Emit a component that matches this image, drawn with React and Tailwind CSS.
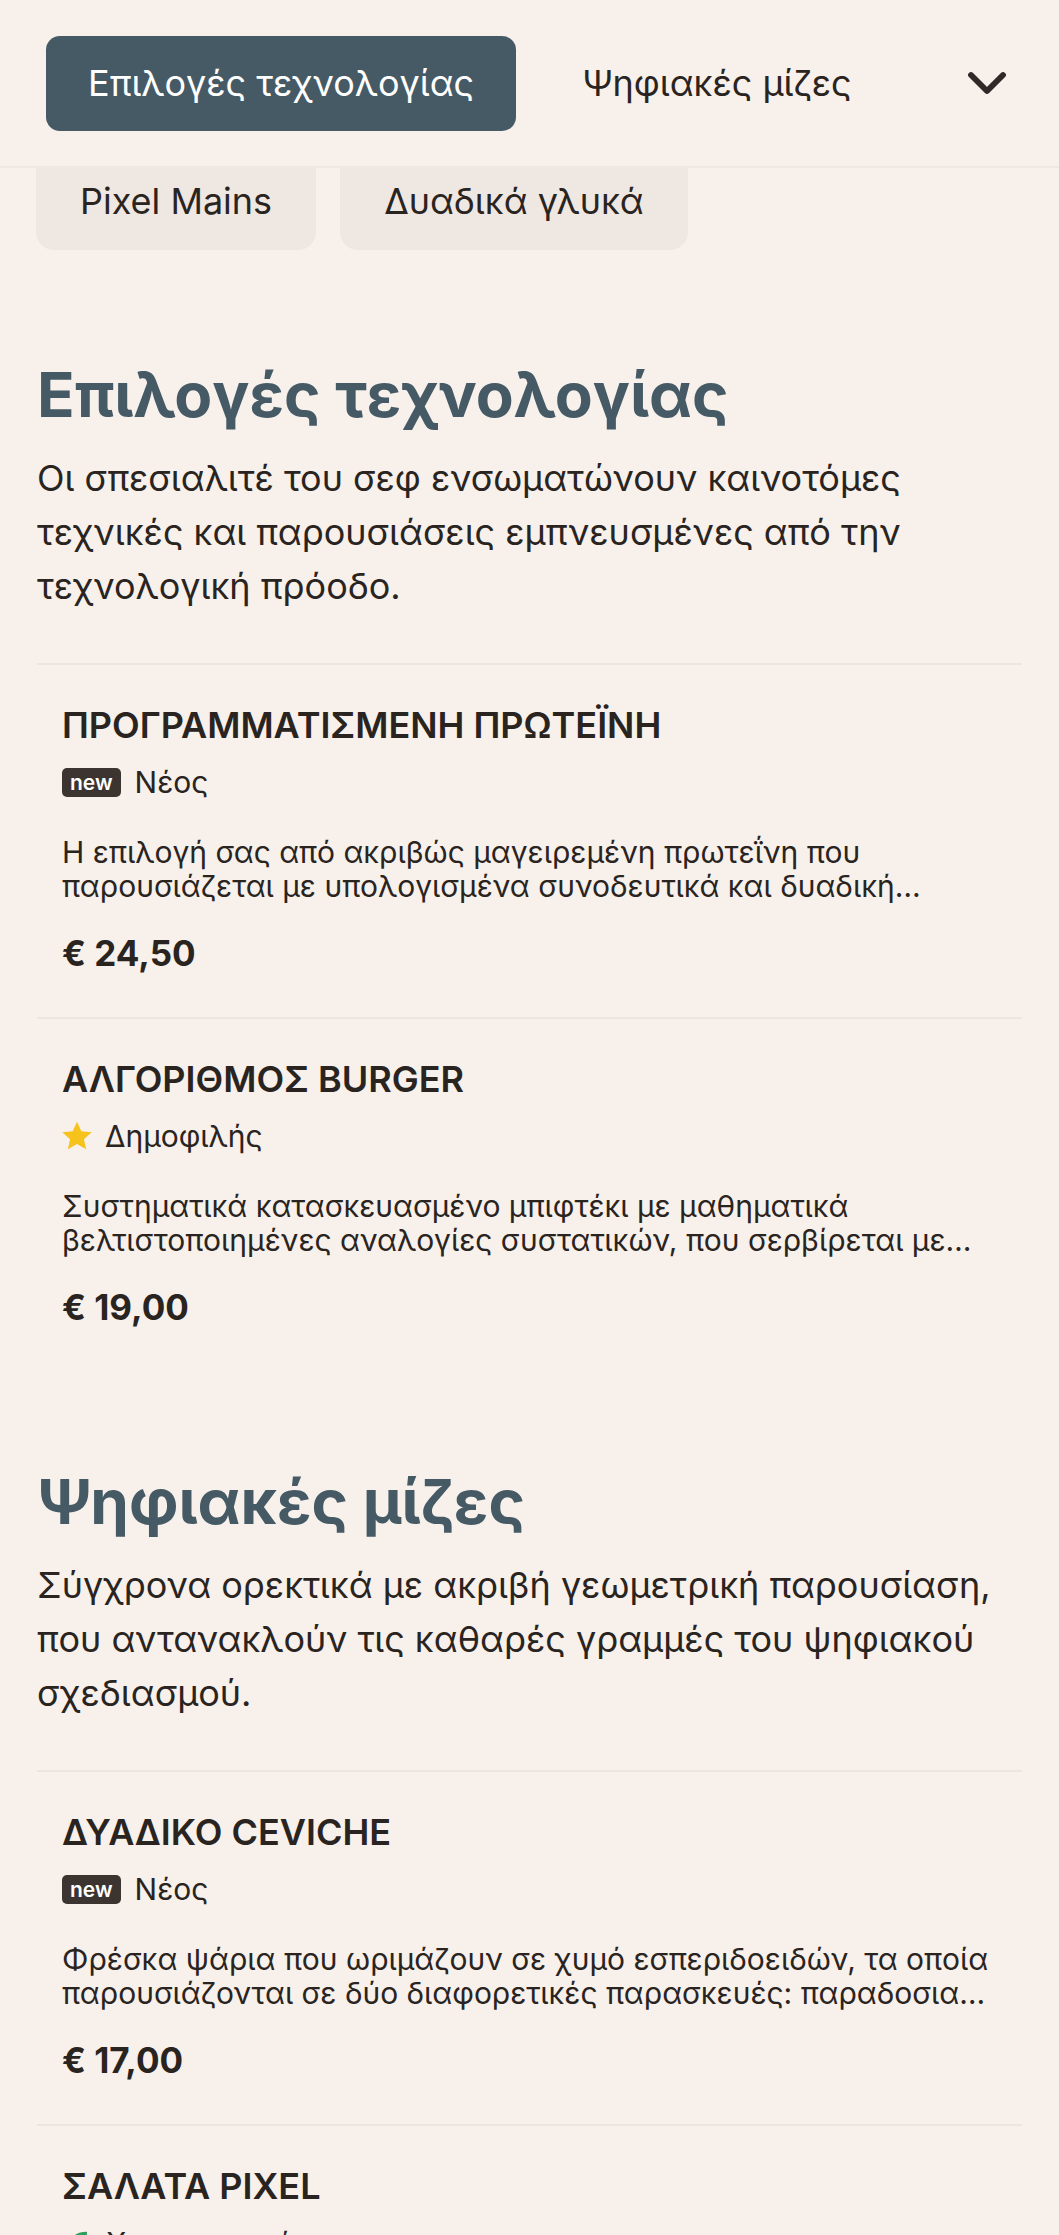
import { ChevronDown } from 'lucide-react';

const sections = [
  {
    id: 'tech',
    title: 'Επιλογές τεχνολογίας',
    text: 'Οι σπεσιαλιτέ του σεφ ενσωματώνουν καινοτόμες τεχνικές και παρουσιάσεις εμπνευσμένες από την τεχνολογική πρόοδο.',
    items: [
      {
        name: 'ΠΡΟΓΡΑΜΜΑΤΙΣΜΕΝΗ ΠΡΩΤΕΪΝΗ',
        tag: 'new',
        desc: 'Η επιλογή σας από ακριβώς μαγειρεμένη πρωτεΐνη που παρουσιάζεται με υπολογισμένα συνοδευτικά και δυαδική σάλτσα της ημέρας.',
        price: '€ 24,50',
      },
      {
        name: 'ΑΛΓΟΡΙΘΜΟΣ BURGER',
        tag: 'popular',
        desc: 'Συστηματικά κατασκευασμένο μπιφτέκι με μαθηματικά βελτιστοποιημένες αναλογίες συστατικών, που σερβίρεται με τηγανητές πατάτες.',
        price: '€ 19,00',
      },
    ],
  },
  {
    id: 'starters',
    title: 'Ψηφιακές μίζες',
    text: 'Σύγχρονα ορεκτικά με ακριβή γεωμετρική παρουσίαση, που αντανακλούν τις καθαρές γραμμές του ψηφιακού σχεδιασμού.',
    items: [
      {
        name: 'ΔΥΑΔΙΚΟ CEVICHE',
        tag: 'new',
        desc: 'Φρέσκα ψάρια που ωριμάζουν σε χυμό εσπεριδοειδών, τα οποία παρουσιάζονται σε δύο διαφορετικές παρασκευές: παραδοσιακή και μοντέρνα.',
        price: '€ 17,00',
      },
      {
        name: 'ΣΑΛΑΤΑ PIXEL',
        tag: 'veg',
        desc: 'Τετράγωνα κομμάτια λαχανικών σε τέλεια διάταξη πλέγματος.',
        price: '€ 14,00',
      },
    ],
  },
];

function Tag({ tag }) {
  if (tag === 'new') {
    return (
      <div className="flex items-center gap-[14px] h-[36px]">
        <span className="bg-[#3b3431] text-white text-[21px] font-semibold leading-none rounded-[5px] px-[8px] h-[29px] flex items-center">
          new
        </span>
        <span className="text-[30px] text-[#2a2421]">Νέος</span>
      </div>
    );
  }
  if (tag === 'popular') {
    return (
      <div className="flex items-center gap-[10px] h-[36px] -ml-[3px]">
        <svg width="36" height="36" viewBox="0 0 24 24" className="text-[#f6c21c]">
          <path
            fill="currentColor"
            d="M12 2.5l2.9 6.3 6.9.7-5.2 4.6 1.5 6.8L12 17.4l-6.1 3.5 1.5-6.8-5.2-4.6 6.9-.7z"
          />
        </svg>
        <span className="text-[30px] text-[#2a2421]">Δημοφιλής</span>
      </div>
    );
  }
  return (
    <div className="flex items-center gap-[14px] h-[36px]">
      <svg width="30" height="30" viewBox="0 0 24 24" className="text-[#2e9e5b]">
        <path fill="currentColor" d="M20 3C11 3 5 8 5 15c0 1.5.4 3 1 4l-2 2 1 1 2-2c1 .6 2.5 1 4 1 7 0 9-8 9-18z" />
      </svg>
      <span className="text-[30px] text-[#2a2421]">Χορτοφαγικό</span>
    </div>
  );
}

function Item({ item, last }) {
  return (
    <div className={'px-[25px] pt-[39px] pb-[43px] ' + (last ? '' : 'border-b-2 border-[#ede5df]')}>
      <h3 className="text-[36px] font-semibold leading-[42px] text-[#2a2421]">{item.name}</h3>
      <div className="mt-[18px]">
        <Tag tag={item.tag} />
      </div>
      <p className="mt-[35px] text-[30px] leading-[34px] text-[#2a2421] line-clamp-2">{item.desc}</p>
      <div className="mt-[29px] text-[35px] font-bold leading-[42px] text-[#2a2421]">{item.price}</div>
    </div>
  );
}

export default function App() {
  return (
    <div className="min-h-screen bg-[#f7f0eb] text-[#2a2421]" style={{ fontFamily: 'Inter, "Noto Sans", sans-serif' }}>
      {/* header tabs */}
      <div className="h-[168px] flex items-center pl-[46px] pr-[40px] border-b-2 border-[#efe8e3] bg-[#f7f0eb] relative">
        <div className="flex-1 flex items-center gap-[24px] overflow-hidden">
          <button className="h-[95px] px-[42px] rounded-[14px] bg-[#465a66] text-white text-[36px] whitespace-nowrap shrink-0">
            Επιλογές τεχνολογίας
          </button>
          <button className="h-[95px] px-[42px] text-[36px] text-[#2a2421] whitespace-nowrap shrink-0">
            Ψηφιακές μίζες
          </button>
        </div>
        <div className="absolute right-[100px] top-0 h-full w-[110px] bg-gradient-to-r from-transparent to-[#f7f0eb] pointer-events-none" />
        <button className="w-[64px] h-[64px] flex items-center justify-center text-[#2f2a28] shrink-0 relative">
          <ChevronDown size={66} strokeWidth={2.2} />
        </button>
      </div>

      {/* sub categories */}
      <div className="flex gap-[24px] px-[36px]">
        <div className="bg-[#efe7e2] rounded-b-[18px] px-[44px] pt-[11px] pb-[27px] text-[36px] leading-[44px]">Pixel Mains</div>
        <div className="bg-[#efe7e2] rounded-b-[18px] px-[44px] pt-[11px] pb-[27px] text-[36px] leading-[44px]">Δυαδικά γλυκά</div>
      </div>

      <div className="px-[37px] pt-[14px]">
        {sections.map((s) => (
          <section key={s.id} className="pt-[94px]">
            <h2 className="text-[62px] font-bold leading-[74px] text-[#465a66]">{s.title}</h2>
            <p className="mt-[19px] text-[36px] leading-[54px] text-[#2a2421]">{s.text}</p>
            <div className="mt-[50px] border-t-2 border-[#ede5df]">
              {s.items.map((item, i) => (
                <Item key={item.name} item={item} last={i === s.items.length - 1} />
              ))}
            </div>
          </section>
        ))}
      </div>
    </div>
  );
}
